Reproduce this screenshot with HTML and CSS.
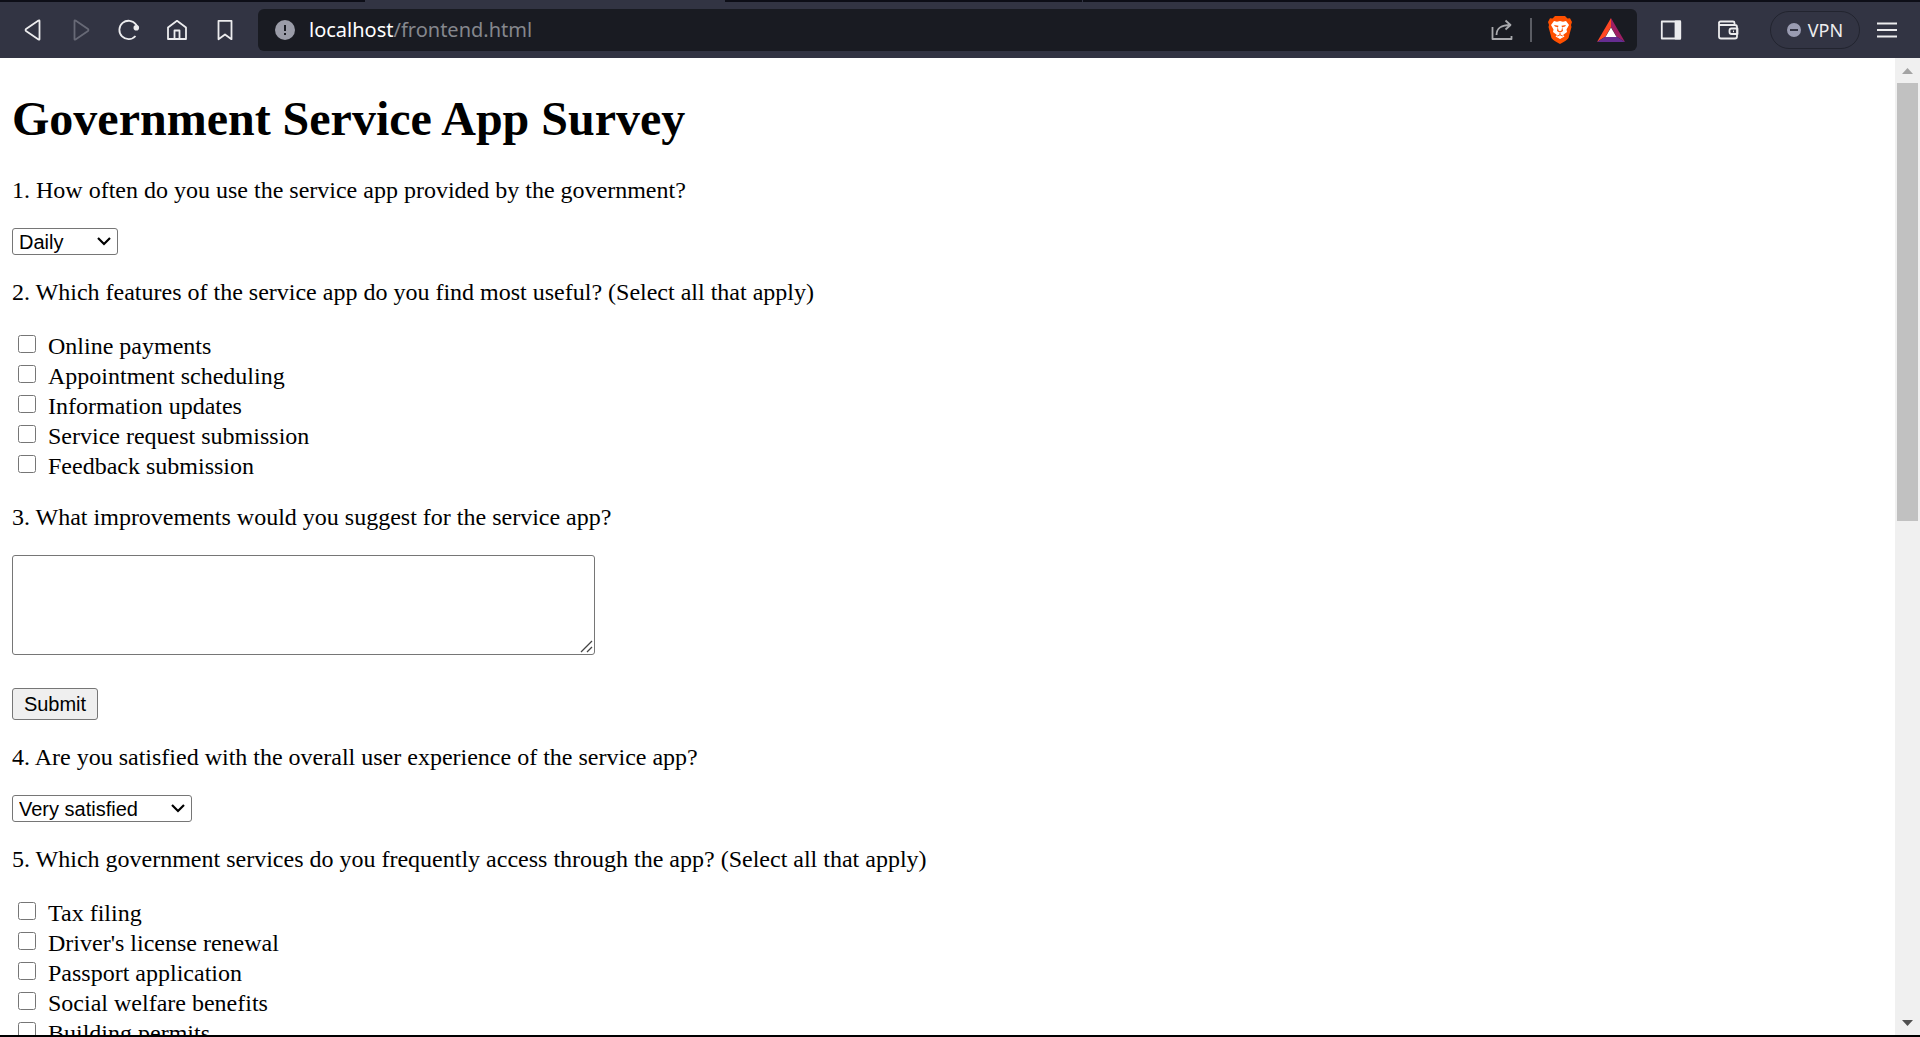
FILE: index.html
```html
<!DOCTYPE html>
<html lang="en">
<head>
<meta charset="utf-8">
<title>Government Service App Survey</title>
<link rel="stylesheet" href="styles.css">
</head>
<body>
<header class="chrome">
  <div class="tab-strip"><span class="tab-active"></span><span class="tab-divider"></span></div>
  <div class="toolbar">
    <nav class="nav-buttons" aria-label="Navigation">
      <button class="icon-button" type="button" aria-label="Back"><svg width="24" height="24" viewBox="0 0 24 24"><path d="M18.500 3v18q0 1-1 .5L5 13q-1-1 0-2L17.500 2.500q1-.5 1 .5z"/></svg></button>
      <button class="icon-button dim" type="button" aria-label="Forward"><svg width="24" height="24" viewBox="0 0 24 24"><path d="M5.500 3v18q0 1 1 .5L19 13q1-1 0-2L6.500 2.500q-1-.5-1 .5z"/></svg></button>
      <button class="icon-button" type="button" aria-label="Reload"><svg width="24" height="24" viewBox="0 0 24 24"><path d="M18.500 18A9.200 9.200 0 1 1 19 6.500L20.500 9"/><circle cx="19.300" cy="9.700" r="1.900" class="solid"/></svg></button>
      <button class="icon-button" type="button" aria-label="Home"><svg width="24" height="24" viewBox="0 0 24 24"><path d="M3 9.500 12 2.800l9 6.700V21H3zM9.500 21v-8.500h5V21"/></svg></button>
      <button class="icon-button" type="button" aria-label="Bookmark"><svg width="24" height="24" viewBox="0 0 24 24"><path d="M5.500 2.800h13v18.400L12 16.500l-6.500 4.700z"/></svg></button>
    </nav>
    <div class="address-bar">
      <svg class="site-info" width="20" height="20" viewBox="0 0 20 20"><circle cx="10" cy="10" r="10"/><path d="M10 5v6M10 13v2"/></svg>
      <div class="url"><span class="host">localhost</span>/frontend.html</div>
      <button class="icon-button share" type="button" aria-label="Share"><svg width="24" height="24" viewBox="0 0 24 24"><path d="M2.500 9v12h19v-3M6.500 17c0-7 5-10 14-10M15.500 2.500 20.500 7l-5 4.500"/></svg></button>
      <span class="divider"></span>
      <button class="icon-button brave" type="button" aria-label="Brave Shields"><svg width="24" height="28" viewBox="0 0 24 28"><path fill="#ff5000" d="M7 0h10l2.500 2.500L22 2.200 24 6l-1 3 .5 2-3 11Q19 24.500 12 28 5 24.500 3.500 22L.5 11l.5-2-1-3 2-3.800 2.500.3z"/><path fill="#fff" d="m6 5 3 .7 3-.7 3 .7 3-.7 3 4-2.500 4.500.5 2.500-4 3 1.500 1.500L12 23l-4.500-2.500L9 19l-4-3 .5-2.500L3 9z"/><path fill="#ff5000" d="m6 9 4.500.8-.5 1.400-3-.7zM18 9l-4.500.8.5 1.400 3-.7zM9.800 11l-.8 4 3 1.800 3-1.800-.8-4-.7 3.500-1.500.8-1.500-.8zM11.500 16h1v2.500l2.500 1.300-.5.800L12 19.300l-2.500 1.300-.5-.8 2.500-1.300z"/></svg></button>
      <button class="icon-button rewards" type="button" aria-label="Brave Rewards"><svg width="28" height="24" viewBox="0 0 28 24"><path fill="#ff4724" d="M14 0v9L8.500 18.500 0 24z"/><path fill="#9e1f63" d="M14 0v9l5.500 9.500L28 24z"/><path fill="#662d91" d="M0 24 8.500 18.500h11L28 24z"/><path fill="#fff" d="m14 9.500 5.500 9.500h-11z"/></svg></button>
    </div>
    <div class="tools">
      <button class="icon-button" type="button" aria-label="Sidebar"><svg width="24" height="24" viewBox="0 0 24 24"><rect x="2.800" y="3.500" width="18.400" height="17"/><path class="solid" d="M16.500 3.500h4.700v17h-4.700z"/></svg></button>
      <button class="icon-button wallet" type="button" aria-label="Wallet"><svg width="24" height="24" viewBox="0 0 24 24"><path d="M3 4v14.500q0 2 2 2h14q2 0 2-2V9q0-2-2-2H3M3 6V5q0-1.500 1.500-1.500H17q1.500 0 1.500 1.500v2M21.500 10.500h-6q-2 0-2 2v1.500q0 2 2 2h6zM17 13.300h1"/></svg></button>
      <button class="vpn" type="button"><svg width="14" height="14" viewBox="0 0 14 14"><circle cx="7" cy="7" r="7"/><path d="M3 7h8"/></svg>VPN</button>
      <button class="icon-button" type="button" aria-label="Menu"><svg width="24" height="24" viewBox="0 0 24 24"><path d="M2 5.500h20M2 12h20M2 18.500h20"/></svg></button>
    </div>
  </div>
</header>
<div class="viewport">
  <main class="page">
    <form>
      <h1>Government Service App Survey</h1>
      <p><label for="frequency">1. How often do you use the service app provided by the government?</label></p>
      <select id="frequency" class="frequency"><option>Daily</option><option>Weekly</option><option>Monthly</option><option>Rarely</option></select>
      <p>2. Which features of the service app do you find most useful? (Select all that apply)</p>
      <div class="options">
        <label><input type="checkbox"> Online payments</label>
        <label><input type="checkbox"> Appointment scheduling</label>
        <label><input type="checkbox"> Information updates</label>
        <label><input type="checkbox"> Service request submission</label>
        <label><input type="checkbox"> Feedback submission</label>
      </div>
      <p><label for="improvements">3. What improvements would you suggest for the service app?</label></p>
      <div class="text-area">
        <textarea id="improvements"></textarea>
        <svg class="grip" width="13" height="13" viewBox="0 0 13 13"><path d="M1 12 12 1M7 12l5-5"/></svg>
      </div>
      <button class="submit" type="submit">Submit</button>
      <p><label for="satisfaction">4. Are you satisfied with the overall user experience of the service app?</label></p>
      <select id="satisfaction" class="satisfaction"><option>Very satisfied</option><option>Satisfied</option><option>Neutral</option><option>Dissatisfied</option></select>
      <p>5. Which government services do you frequently access through the app? (Select all that apply)</p>
      <div class="options">
        <label><input type="checkbox"> Tax filing</label>
        <label><input type="checkbox"> Driver's license renewal</label>
        <label><input type="checkbox"> Passport application</label>
        <label><input type="checkbox"> Social welfare benefits</label>
        <label><input type="checkbox"> Building permits</label>
      </div>
    </form>
  </main>
  <div class="scrollbar" aria-hidden="true">
    <svg width="11" height="6" viewBox="0 0 11 6"><path fill="#a3a3a3" d="M5.500 0 11 6H0z"/></svg>
    <div class="track"><div class="thumb"></div></div>
    <svg width="11" height="6" viewBox="0 0 11 6"><path fill="#505050" d="M0 0h11L5.500 6z"/></svg>
  </div>
</div>
</body>
</html>
```
FILE: styles.css
```css
* { box-sizing: border-box; }
body {
  margin: 0;
  height: 100vh;
  display: flex;
  flex-direction: column;
  overflow: hidden;
  background: #fff;
  border-bottom: 2px solid #000;
}
button { font: inherit; cursor: pointer; }

.chrome { flex: none; background: #323443; color: #f0f0f2; font-family: "Noto Sans", sans-serif; }
.tab-strip { display: flex; height: 2px; padding-left: 365px; background: #0d0e17; }
.tab-active { width: 360px; background: #323443; }
.tab-divider { width: 1px; margin-left: 357px; background: #323443; }
.toolbar { display: flex; align-items: center; height: 56px; padding: 0 21px; }
.nav-buttons { display: flex; gap: 24px; margin-right: 21px; }
.icon-button { display: flex; padding: 0; border: 0; background: none; color: #ececee; }
.icon-button.dim { color: #676976; }
.icon-button > svg { fill: none; stroke: currentColor; stroke-width: 1.8; stroke-linejoin: round; }
.icon-button .solid { fill: currentColor; }
.icon-button.brave > svg, .icon-button.rewards > svg { stroke: none; }
.address-bar {
  flex: 1;
  display: flex;
  align-items: center;
  height: 42px;
  padding: 0 12px 0 17px;
  border-radius: 6px;
  background: #191b22;
}
.site-info { fill: #9a9ca8; stroke: #191b22; stroke-width: 2; }
.site-info circle { stroke: none; }
.url { flex: 1; margin-left: 14px; font-size: 20px; line-height: 28px; color: #85878d; }
.host { color: #fff; }
.icon-button.share { color: #a9aaae; }
.divider { width: 2px; height: 24px; margin: 0 16px; background: #5b5d64; }
.rewards { margin-left: 25px; }
.tools { display: flex; align-items: center; margin-left: 22px; }
.wallet { margin: 0 30px 0 33px; }
.vpn {
  display: flex;
  align-items: center;
  justify-content: center;
  gap: 7px;
  width: 90px;
  height: 38px;
  margin-right: 15px;
  padding: 0;
  border: 1px solid #22242f;
  border-radius: 19px;
  background: none;
  color: #ececee;
  font-size: 18px;
}
.vpn svg { fill: #9a9cb2; stroke: #323443; stroke-width: 2; }
.vpn circle { stroke: none; }

.viewport { flex: 1; display: flex; min-height: 0; }
.page {
  flex: 1;
  overflow: hidden;
  padding: 0 12px;
  font: 24px/27px "Liberation Serif", "Times New Roman", serif;
  color: #000;
}
h1 { margin: 33px 0 31px; font-size: 48px; line-height: 55px; }
p { margin: 24px 0; }
select, textarea, .submit {
  display: block;
  margin: 0;
  border: 1px solid #767676;
  border-radius: 3px;
  color: #000;
  font: 20px "Liberation Sans", Arial, sans-serif;
}
select {
  appearance: none;
  height: 27px;
  padding: 0 20px 0 6px;
  background: #fff url("data:image/svg+xml,%3Csvg xmlns='http://www.w3.org/2000/svg' width='14' height='9' viewBox='0 0 14 9'%3E%3Cpath d='M1 1l6 6 6-6' fill='none' stroke='%23000' stroke-width='2.2'/%3E%3C/svg%3E") no-repeat right 6px center;
}
.frequency { width: 106px; }
.satisfaction { width: 180px; }
.text-area { position: relative; width: 583px; }
textarea { width: 100%; height: 100px; background: #fff; resize: none; }
.grip { position: absolute; right: 2px; bottom: 2px; fill: none; stroke: #444; stroke-width: 1.3; }
.submit { width: 86px; height: 32px; margin-top: 33px; padding: 0; background: #efefef; }
.options label { display: flex; align-items: center; width: max-content; height: 30px; padding-top: 2px; }
.options input { width: 18px; height: 18px; margin: 0 12px 4px 6px; }

.scrollbar {
  flex: none;
  width: 25px;
  display: flex;
  flex-direction: column;
  align-items: center;
  padding: 10px 2px 9px;
  background: #f0f0f0;
}
.track { flex: 1; width: 21px; margin: 9px 0; }
.thumb { height: 47.2%; background: #c1c1c1; }
```
